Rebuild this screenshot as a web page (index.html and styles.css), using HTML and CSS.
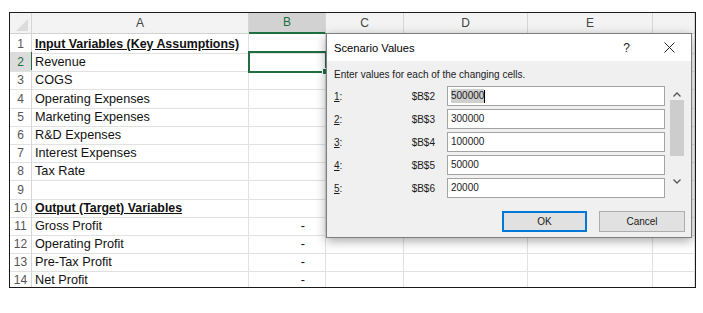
FILE: index.html
```html
<!DOCTYPE html>
<html lang="en">
  <head>
    <meta charset="UTF-8">
    <title>Scenario Values</title>
    <link rel="stylesheet" href="styles.css">
  </head>
  <body>
    <div class="frame">
      <div class="sheet">
        <div class="row head">
          <div class="corner"><span class="tri"></span></div>
          <div class="col">A</div>
          <div class="col sel">B</div>
          <div class="col">C</div>
          <div class="col">D</div>
          <div class="col">E</div>
          <div class="col"></div>
        </div>
        <div class="row">
          <div class="num">1</div>
          <div class="cell title">Input Variables (Key Assumptions)</div>
          <div class="cell"></div><div class="cell"></div><div class="cell"></div><div class="cell"></div><div class="cell"></div>
        </div>
        <div class="row">
          <div class="num active">2</div>
          <div class="cell">Revenue</div>
          <div class="cell current"><span class="handle"></span></div><div class="cell"></div><div class="cell"></div><div class="cell"></div><div class="cell"></div>
        </div>
        <div class="row">
          <div class="num">3</div>
          <div class="cell">COGS</div>
          <div class="cell"></div><div class="cell"></div><div class="cell"></div><div class="cell"></div><div class="cell"></div>
        </div>
        <div class="row">
          <div class="num">4</div>
          <div class="cell">Operating Expenses</div>
          <div class="cell"></div><div class="cell"></div><div class="cell"></div><div class="cell"></div><div class="cell"></div>
        </div>
        <div class="row">
          <div class="num">5</div>
          <div class="cell">Marketing Expenses</div>
          <div class="cell"></div><div class="cell"></div><div class="cell"></div><div class="cell"></div><div class="cell"></div>
        </div>
        <div class="row">
          <div class="num">6</div>
          <div class="cell">R&amp;D Expenses</div>
          <div class="cell"></div><div class="cell"></div><div class="cell"></div><div class="cell"></div><div class="cell"></div>
        </div>
        <div class="row">
          <div class="num">7</div>
          <div class="cell">Interest Expenses</div>
          <div class="cell"></div><div class="cell"></div><div class="cell"></div><div class="cell"></div><div class="cell"></div>
        </div>
        <div class="row">
          <div class="num">8</div>
          <div class="cell">Tax Rate</div>
          <div class="cell"></div><div class="cell"></div><div class="cell"></div><div class="cell"></div><div class="cell"></div>
        </div>
        <div class="row">
          <div class="num">9</div>
          <div class="cell"></div>
          <div class="cell"></div><div class="cell"></div><div class="cell"></div><div class="cell"></div><div class="cell"></div>
        </div>
        <div class="row">
          <div class="num">10</div>
          <div class="cell title">Output (Target) Variables</div>
          <div class="cell"></div><div class="cell"></div><div class="cell"></div><div class="cell"></div><div class="cell"></div>
        </div>
        <div class="row">
          <div class="num">11</div>
          <div class="cell">Gross Profit</div>
          <div class="cell value">-</div><div class="cell"></div><div class="cell"></div><div class="cell"></div><div class="cell"></div>
        </div>
        <div class="row">
          <div class="num">12</div>
          <div class="cell">Operating Profit</div>
          <div class="cell value">-</div><div class="cell"></div><div class="cell"></div><div class="cell"></div><div class="cell"></div>
        </div>
        <div class="row">
          <div class="num">13</div>
          <div class="cell">Pre-Tax Profit</div>
          <div class="cell value">-</div><div class="cell"></div><div class="cell"></div><div class="cell"></div><div class="cell"></div>
        </div>
        <div class="row">
          <div class="num">14</div>
          <div class="cell">Net Profit</div>
          <div class="cell value">-</div><div class="cell"></div><div class="cell"></div><div class="cell"></div><div class="cell"></div>
        </div>
      </div>

      <div class="dialog">
        <div class="dialog-title">
          <span class="caption">Scenario Values</span>
          <span class="help">?</span>
          <svg class="close" width="11" height="11" viewBox="0 0 11 11">
            <path d="M0.5 0.5 L10.5 10.5 M10.5 0.5 L0.5 10.5" stroke="#222" stroke-width="1" fill="none"/>
          </svg>
        </div>
        <div class="dialog-body">
          <p class="hint">Enter values for each of the changing cells.</p>
          <div class="fields">
            <div class="field-list">
              <div class="field">
                <span class="idx"><u>1</u>:</span>
                <span class="ref">$B$2</span>
                <div class="input"><span class="picked">500000</span><span class="caret"></span></div>
              </div>
              <div class="field">
                <span class="idx"><u>2</u>:</span>
                <span class="ref">$B$3</span>
                <div class="input">300000</div>
              </div>
              <div class="field">
                <span class="idx"><u>3</u>:</span>
                <span class="ref">$B$4</span>
                <div class="input">100000</div>
              </div>
              <div class="field">
                <span class="idx"><u>4</u>:</span>
                <span class="ref">$B$5</span>
                <div class="input">50000</div>
              </div>
              <div class="field">
                <span class="idx"><u>5</u>:</span>
                <span class="ref">$B$6</span>
                <div class="input">20000</div>
              </div>
            </div>
            <div class="scrollbar">
              <svg width="8" height="5" viewBox="0 0 8 5"><path d="M0.5 4.5 L4 1 L7.5 4.5" stroke="#555" stroke-width="1.3" fill="none"/></svg>
              <div class="track"><div class="thumb"></div></div>
              <svg width="8" height="5" viewBox="0 0 8 5"><path d="M0.5 0.5 L4 4 L7.5 0.5" stroke="#555" stroke-width="1.3" fill="none"/></svg>
            </div>
          </div>
          <div class="buttons">
            <button class="btn default">OK</button>
            <button class="btn">Cancel</button>
          </div>
        </div>
      </div>
    </div>
  </body>
</html>
```

FILE: styles.css
```css
body {
  margin: 0;
  background-color: white;
  font-family: "Liberation Sans", Arial, sans-serif;
}
.frame {
  position: relative;
  margin: 12px 0 0 9px;
  width: 685px;
  height: 274px;
  border: 1px solid #1a1a1a;
  overflow: hidden;
}
.row {
  display: grid;
  grid-template-columns: 22px 217px 77px 78px 124px 125px 1fr;
  height: 18.2px;
}
.row.head {
  height: 21px;
  background-color: #f3f3f3;
  border-bottom: 1px solid #d0d0d0;
  box-sizing: border-box;
}
.corner {
  position: relative;
  border-right: 1px solid #d6d6d6;
}
.tri {
  position: absolute;
  right: 3px;
  bottom: 3px;
  width: 0;
  height: 0;
  border-left: 12px solid transparent;
  border-bottom: 12px solid #dcdcdc;
}
.col {
  border-right: 1px solid #d6d6d6;
  text-align: center;
  font-family: "Liberation Sans Narrow", "Liberation Sans", sans-serif;
  font-size: 12px;
  line-height: 20px;
  color: #444;
}
.col.sel {
  background-color: #d2d2d2;
  color: #1e6e41;
  border-bottom: 2px solid #1e6e41;
  line-height: 19px;
}
.num {
  border-right: 1px solid #d6d6d6;
  border-bottom: 1px solid #e1e1e1;
  text-align: center;
  font-size: 12px;
  line-height: 18px;
  padding-top: 1px;
  color: #555;
}
.num.active {
  background-color: #dcdcdc;
  color: #1e6e41;
  border-right-color: #1e6e41;
}
.cell {
  position: relative;
  border-right: 1px solid #e1e1e1;
  border-bottom: 1px solid #e1e1e1;
  padding: 1px 3px 0;
  font-size: 12.7px;
  line-height: 18px;
  color: #111;
  white-space: nowrap;
}
.cell.title {
  font-size: 12.4px;
  font-weight: bold;
  text-decoration: underline;
}
.cell.value {
  text-align: right;
  padding-right: 20px;
}
.cell.current {
  outline: 2px solid #1e6e41;
  outline-offset: -1px;
  z-index: 1;
}
.handle {
  position: absolute;
  right: -4px;
  bottom: -4px;
  width: 5px;
  height: 5px;
  background-color: #1e6e41;
  border: 1px solid white;
}

/* dialog */
.dialog {
  position: absolute;
  left: 316px;
  top: 20px;
  width: 366px;
  height: 205px;
  box-sizing: border-box;
  border: 1px solid #7d7d7d;
  background-color: #f0f0f0;
  box-shadow: 0 3px 10px rgba(0, 0, 0, 0.35);
  z-index: 2;
  font-size: 10px;
  color: #1a1a1a;
}
.dialog-title {
  display: flex;
  align-items: center;
  height: 27px;
  padding: 0 16px 0 7px;
  background-color: white;
}
.caption {
  flex: 1;
  font-size: 11.2px;
  color: #000;
}
.help {
  font-size: 12px;
  margin-right: 34px;
}
.dialog-body {
  padding: 6px 6px 0 7px;
}
.hint {
  margin: 0 0 4px;
  line-height: 15px;
}
.fields {
  display: flex;
  gap: 5px;
}
.field-list {
  display: flex;
  flex-direction: column;
  gap: 3px;
}
.field {
  display: grid;
  grid-template-columns: 20px 93px 218px;
  align-items: center;
  height: 20px;
}
.idx {
  font-size: 10px;
}
.ref {
  text-align: right;
  padding-right: 12px;
  font-size: 10px;
}
.input {
  height: 20px;
  box-sizing: border-box;
  border: 1px solid #a3a3a3;
  background-color: white;
  padding-left: 3px;
  line-height: 18px;
  font-size: 10px;
  display: flex;
  align-items: center;
}
.picked {
  background-color: #cfcfcf;
  line-height: 14px;
}
.caret {
  width: 1px;
  height: 13px;
  background-color: #000;
}
.scrollbar {
  width: 14px;
  display: flex;
  flex-direction: column;
  align-items: center;
  padding-top: 6px;
}
.track {
  width: 14px;
  height: 79px;
  padding-top: 3px;
}
.thumb {
  width: 14px;
  height: 56px;
  background-color: #cdcdcd;
}
.buttons {
  display: flex;
  justify-content: flex-end;
  gap: 12px;
  margin-top: 13px;
}
.btn {
  width: 86px;
  height: 21px;
  box-sizing: border-box;
  background-color: #e1e1e1;
  border: 1px solid #adadad;
  font-family: inherit;
  font-size: 10px;
  color: #1a1a1a;
  padding: 0;
}
.btn.default {
  width: 85px;
  border: 2px solid #0078d7;
}
```
